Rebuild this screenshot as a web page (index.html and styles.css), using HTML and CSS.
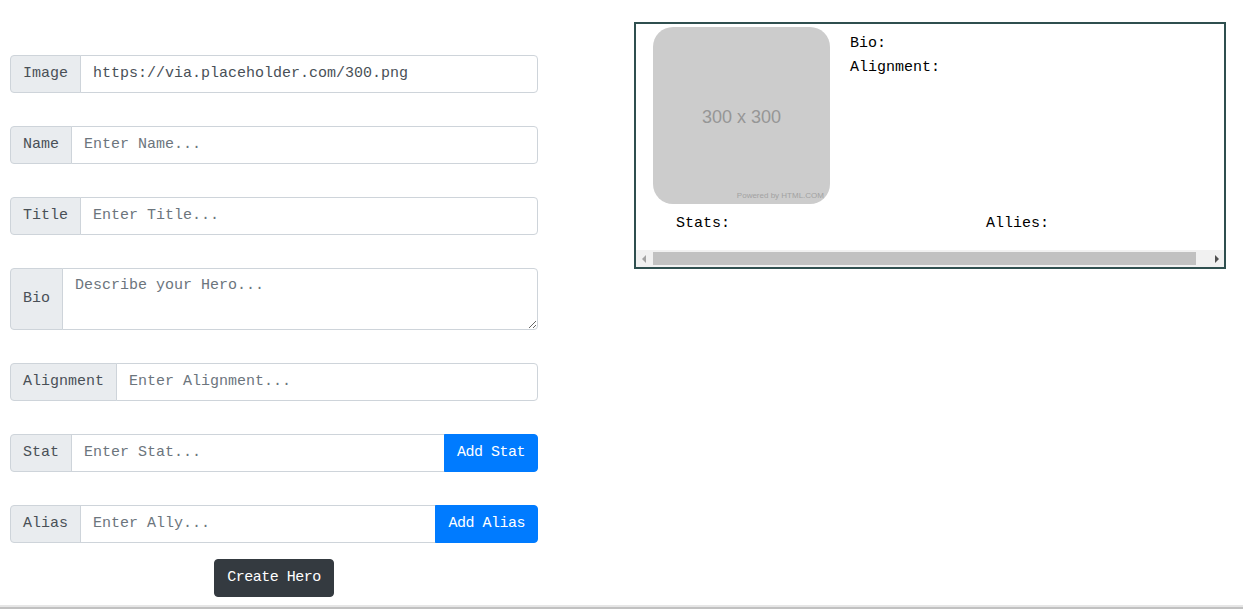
FILE: index.html
```html
<!DOCTYPE html>
<html>
<head>
<meta charset="utf-8">
<link rel="stylesheet" href="styles.css">
</head>
<body>
<div class="page">
  <form class="hero-form">
    <div class="group">
      <span class="addon">Image</span>
      <input class="field" type="text" value="https://via.placeholder.com/300.png">
    </div>
    <div class="group">
      <span class="addon">Name</span>
      <input class="field" type="text" placeholder="Enter Name...">
    </div>
    <div class="group">
      <span class="addon">Title</span>
      <input class="field" type="text" placeholder="Enter Title...">
    </div>
    <div class="group group-tall">
      <span class="addon">Bio</span>
      <textarea class="field area" placeholder="Describe your Hero..."></textarea>
    </div>
    <div class="group">
      <span class="addon">Alignment</span>
      <input class="field" type="text" placeholder="Enter Alignment...">
    </div>
    <div class="group">
      <span class="addon">Stat</span>
      <input class="field" type="text" placeholder="Enter Stat...">
      <button type="button" class="btn btn-primary btn-append">Add Stat</button>
    </div>
    <div class="group">
      <span class="addon">Alias</span>
      <input class="field" type="text" placeholder="Enter Ally...">
      <button type="button" class="btn btn-primary btn-append">Add Alias</button>
    </div>
    <div class="submit-row">
      <button type="button" class="btn btn-dark">Create Hero</button>
    </div>
  </form>

  <div class="card">
    <div class="card-body">
      <div class="card-top">
        <div class="placeholder-img">
          <span class="ph-size">300 x 300</span>
          <span class="ph-powered">Powered by HTML.COM</span>
        </div>
        <div class="info">
          <div class="line">Bio:</div>
          <div class="line">Alignment:</div>
        </div>
      </div>
      <div class="card-lists">
        <div class="line">Stats:</div>
        <div class="line">Allies:</div>
      </div>
    </div>
    <div class="hscroll">
      <span class="arrow arrow-left"></span>
      <span class="track"><span class="thumb"></span></span>
      <span class="arrow arrow-right"></span>
    </div>
  </div>
</div>
<div class="page-scroll"></div>
</body>
</html>
```

FILE: styles.css
```css
* { box-sizing: border-box; }

html, body {
  margin: 0;
  padding: 0;
  background: #fff;
  overflow: hidden;
}

body {
  font-family: "Liberation Mono", "DejaVu Sans Mono", monospace;
  font-size: 15px;
  line-height: 24px;
  color: #212529;
}

.page {
  display: flex;
  align-items: flex-start;
  padding: 22px 0 0 10px;
}

.hero-form {
  width: 528px;
  display: flex;
  flex-direction: column;
  gap: 33px;
  padding-top: 33px;
}

.group {
  display: flex;
  height: 38px;
}

.group-tall {
  height: 62px;
}

.addon {
  display: flex;
  align-items: center;
  padding: 0 12px;
  background: #e9ecef;
  border: 1px solid #ced4da;
  border-radius: 4px 0 0 4px;
  color: #495057;
  white-space: nowrap;
}

.field {
  flex: 1;
  min-width: 0;
  height: 100%;
  margin: 0;
  margin-left: -1px;
  padding: 5px 12px 7px;
  border: 1px solid #ced4da;
  border-radius: 0 4px 4px 0;
  font: inherit;
  line-height: 24px;
  color: #495057;
  background: #fff;
  outline: none;
}

.field::placeholder {
  color: #6c757d;
  opacity: 1;
}

.area {
  resize: vertical;
  padding-top: 5px;
}

.group .field:has(+ .btn-append) {
  border-radius: 0;
}

.btn {
  font: inherit;
  line-height: 24px;
  letter-spacing: -0.5px;
  padding: 6px 12px;
  border: 1px solid transparent;
  border-radius: 4px;
  color: #fff;
  cursor: pointer;
  white-space: nowrap;
}

.btn-primary {
  background: #007bff;
  border-color: #007bff;
}

.btn-append {
  margin-left: -1px;
  border-radius: 0 4px 4px 0;
  height: 38px;
}

.btn-dark {
  background: #343a40;
  border-color: #343a40;
  height: 38px;
}

.submit-row {
  display: flex;
  justify-content: center;
  margin-top: -17px;
}

.card {
  margin-left: 96px;
  width: 592px;
  height: 247px;
  border: 2px solid #2f4f4f;
  display: flex;
  flex-direction: column;
}

.card-body {
  flex: 1;
  display: flex;
  flex-direction: column;
}

.card-top {
  display: flex;
  padding: 3px 0 0 17px;
}

.placeholder-img {
  width: 177px;
  height: 177px;
  background: #cccccc;
  border-radius: 20px;
  display: flex;
  flex-direction: column;
  align-items: center;
  font-family: "Liberation Sans", Arial, sans-serif;
}

.ph-size {
  margin-top: 78px;
  font-size: 18px;
  line-height: 24px;
  color: #969696;
}

.ph-powered {
  margin-top: auto;
  align-self: flex-end;
  margin-right: 6px;
  margin-bottom: 3px;
  font-size: 8px;
  line-height: 10px;
  color: #a2a2a2;
}

.info {
  padding: 5px 0 0 20px;
  color: #000;
}

.line {
  height: 24px;
  color: #000;
}

.card-lists {
  display: grid;
  grid-template-columns: 310px auto;
  padding: 8px 0 0 40px;
}

.hscroll {
  display: flex;
  height: 17px;
  background: #f1f1f1;
  align-items: center;
}

.arrow {
  width: 15px;
  height: 17px;
  display: flex;
  align-items: center;
  justify-content: center;
}

.arrow::before {
  content: "";
  width: 0;
  height: 0;
  border-top: 4px solid transparent;
  border-bottom: 4px solid transparent;
}

.arrow-left::before {
  border-right: 4px solid #a3a3a3;
}

.arrow-right::before {
  border-left: 4px solid #505050;
}

.track {
  flex: 1;
  height: 17px;
  display: flex;
  align-items: center;
  padding-left: 2px;
  padding-right: 13px;
}

.thumb {
  flex: 1;
  height: 13px;
  background: #c1c1c1;
}

.page-scroll {
  position: fixed;
  left: 0;
  right: 0;
  bottom: 0;
  height: 4px;
  border-top: 2px solid #e6e6e6;
  background: #c1c1c1;
}
```
